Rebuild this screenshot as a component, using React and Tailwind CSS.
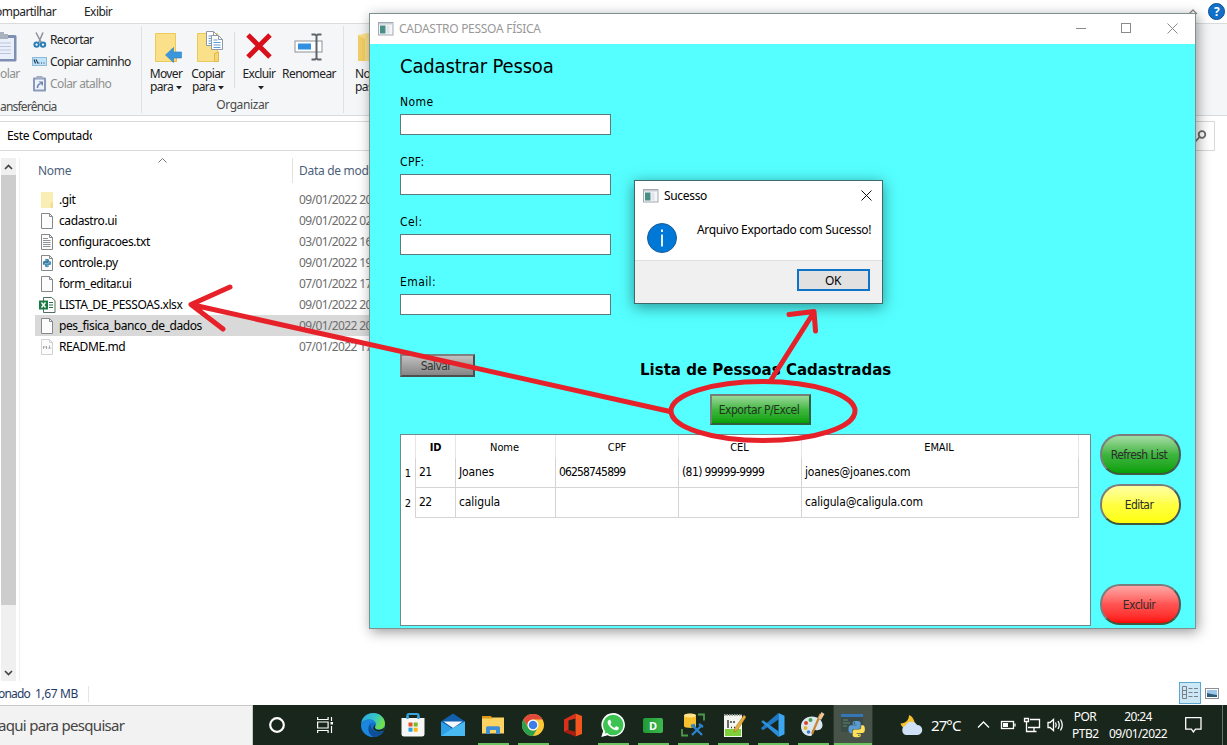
import React from "react";
import { FaWhatsapp } from "react-icons/fa";

const PY =
  "M14.25.18l.9.2.73.26.59.3.45.32.34.34.25.34.16.33.1.3.04.26.02.2-.01.13V8.5l-.05.63-.13.55-.21.46-.26.38-.3.31-.33.25-.35.19-.35.14-.33.1-.3.07-.26.04-.21.02H8.77l-.69.05-.59.14-.5.22-.41.27-.33.32-.27.35-.2.36-.15.37-.1.35-.07.32-.04.27-.02.21v3.06H3.17l-.21-.03-.28-.07-.32-.12-.35-.18-.36-.26-.36-.36-.35-.46-.32-.59-.28-.73-.21-.88-.14-1.05-.05-1.23.06-1.22.16-1.04.24-.87.32-.71.36-.57.4-.44.42-.33.42-.24.4-.16.36-.1.32-.05.24-.01h.16l.06.01h8.16v-.83H6.18l-.01-2.75-.02-.37.05-.34.11-.31.17-.28.25-.26.31-.23.38-.2.44-.18.51-.15.58-.12.64-.1.71-.06.77-.04.84-.02 1.27.05zm-6.3 1.98l-.23.33-.08.41.08.41.23.34.33.22.41.09.41-.09.33-.22.23-.34.08-.41-.08-.41-.23-.33-.33-.22-.41-.09-.41.09z";

const PythonMark = ({ x = 0, y = 0, s = 1, blue = "#3b7ab0", yellow = "#ffd94a" }) => (
  <g transform={`translate(${x} ${y}) scale(${s})`}>
    <path d={PY} fill={blue} />
    <path d={PY} fill={yellow} transform="rotate(180 12 12)" />
  </g>
);

/* ---------- ribbon ---------- */

const PasteIcon = () => (
  <svg width="18" height="31" viewBox="0 0 18 31">
    <rect x="-8" y="3" width="24.5" height="26.5" rx="1.5" fill="#7f8fb2" />
    <rect x="-6" y="6" width="20" height="21" fill="#e9f0fa" />
    <path d="M-2 0h6v2h4v5h-12z" fill="#a9b1bf" />
    <path d="M0 11h11M0 14.5h11M0 18h11M0 21.5h11" stroke="#b9c6de" />
  </svg>
);

const ScissorsIcon = () => (
  <svg width="16" height="16" viewBox="0 0 16 16" fill="none">
    <path d="M4 0.5L9.5 11M11 0.5L6.5 11" stroke="#8a9099" strokeWidth="1.5" />
    <circle cx="4.6" cy="12.6" r="2.2" stroke="#2a7fb8" strokeWidth="2" />
    <circle cx="11" cy="12.6" r="2.2" stroke="#2a7fb8" strokeWidth="2" />
  </svg>
);

const PathIcon = () => (
  <svg width="16" height="16" viewBox="0 0 16 16">
    <rect x="0.5" y="3.5" width="14" height="8" fill="#bfe3fa" stroke="#8fb9d6" />
    <path d="M2 5.5l1.5 4M4 5.5l2 4M6.5 9h1M9 9h1M11.5 9h1" stroke="#1d3c55" strokeWidth="1.2" />
  </svg>
);

const ShortcutIcon = () => (
  <svg width="16" height="16" viewBox="0 0 16 16">
    <rect x="1" y="1.5" width="13" height="14" rx="1" fill="#8a9abb" />
    <rect x="3" y="3.5" width="9" height="10" fill="#eef3fa" />
    <rect x="4.500" y="0" width="6" height="3" fill="#a4aebf" />
    <path d="M5.500 12c0-3 1-4 3-4" stroke="#7187b0" strokeWidth="1.6" fill="none" />
    <path d="M6.500 5.500h4.500v4.500z" fill="#7187b0" />
  </svg>
);

const FolderBody = () => (
  <>
    <path d="M0.500 0.500h20v28h-20z" fill="#fbe08a" stroke="#ecc95c" />
    <path d="M17.500 28.500v-8l4-1.500v9.500z" fill="#f5d673" stroke="#dfb94a" />
  </>
);

const MoveIcon = () => (
  <svg width="28" height="30" viewBox="0 0 28 30" className="-mb-[3px] ml-[6px]">
    <FolderBody />
    <path d="M10.500 22l8-7.500v4.500h8v6h-8v4.500z" fill="#3a97dd" stroke="#2b7fc4" strokeWidth="0.600" />
  </svg>
);

const Sheet = ({ x, y }) => (
  <g transform={`translate(${x} ${y})`}>
    <path d="M.5.500h7l4 4v10h-11z" fill="#fff" stroke="#8e99a6" />
    <path d="M7.500.500v4h4" fill="none" stroke="#8e99a6" />
    <path d="M2.500 5h4M2.500 7.500h7M2.500 10h7M2.500 12.500h7" stroke="#5e9bd3" />
  </g>
);

const CopyIcon = () => (
  <svg width="28" height="32" viewBox="0 0 28 32" className="-mb-[3px] ml-[6px]">
    <g transform="translate(0 2)">
      <FolderBody />
    </g>
    <Sheet x={9} y={0} />
    <Sheet x={14} y={4} />
  </svg>
);

const RenameIcon = () => (
  <svg width="30" height="28" viewBox="0 0 30 28" fill="none" className="-mb-[1px]">
    <rect x="1" y="8" width="27" height="11" fill="#fff" stroke="#8d9298" />
    <rect x="4" y="10.500" width="13" height="6" fill="#2f8fe0" />
    <path d="M17.500 1.500h3.500l1.500 1 1.500-1h3.500M22.500 2v24M17.500 26.500h3.500l1.500-1 1.500 1h3.500" stroke="#5f6468" strokeWidth="2" />
  </svg>
);

const Caret = () => (
  <svg width="6" height="4" viewBox="0 0 6 4" className="ml-[3px] inline-block align-middle">
    <path d="M0 0h6L3 3.500z" fill="#222" />
  </svg>
);

const BigButton = ({ icon, l1, l2, width }) => (
  <div className={`flex shrink-0 flex-col items-center ${width}`}>
    <div className="flex h-[35px] items-end justify-center pb-[1px]">{icon}</div>
    <div className="mt-[6px] text-center leading-[13px] whitespace-nowrap">
      <div>{l1}</div>
      <div className="h-[13px]">{l2}</div>
    </div>
  </div>
);

/* ---------- file list ---------- */

const FileIcon = ({ kind }) => {
  if (kind === "folder")
    return (
      <svg width="16" height="16" viewBox="0 0 16 16">
        <path d="M2 0h12v16H2z" fill="#fbeeb5" />
        <path d="M11.500 16v-5l2.500-1v6z" fill="#f2dd92" />
      </svg>
    );
  if (kind === "excel")
    return (
      <svg width="17" height="16" viewBox="0 0 17 16">
        <path d="M4.500.5h8l3.500 3v12h-11.500z" fill="#fff" stroke="#50705f" />
        <path d="M10 5.500h4M10 8h4M10 10.500h4" stroke="#217346" />
        <rect x="0" y="3.500" width="9" height="9" fill="#1a7a43" />
        <path d="M2.500 5.500l4 5M6.500 5.500l-4 5" stroke="#fff" strokeWidth="1.400" />
      </svg>
    );
  return (
    <svg width="16" height="16" viewBox="0 0 16 16">
      <path d="M2.500.5h8l3 3v12h-11z" fill="#fcfcfd" stroke={kind === "md" ? "#cfd1d4" : "#85888c"} />
      <path d="M10.500.5v3h3" fill="none" stroke={kind === "md" ? "#cfd1d4" : "#85888c"} />
      {kind === "txt" && <path d="M4 4.500h5M4 6.500h7.500M4 8.500h7.500M4 10.500h7.500M4 12.500h7.500" stroke="#8f9398" />}
      {kind === "py" && <PythonMark x={3.9} y={4} s={0.34} blue="#3d7ea6" yellow="#4d90b5" />}
      {kind === "md" && <path d="M4.500 10V7l1.500 1.500L7.500 7v3M10.500 6.500v3M9 8.500l1.500 1.500 1.500-1.500" stroke="#a9abae" fill="none" />}
    </svg>
  );
};

const FILES = [
  { n: ".git", k: "folder", d: "09/01/2022 20:11" },
  { n: "cadastro.ui", k: "file", d: "09/01/2022 02:08" },
  { n: "configuracoes.txt", k: "txt", d: "03/01/2022 16:40" },
  { n: "controle.py", k: "py", d: "09/01/2022 19:58" },
  { n: "form_editar.ui", k: "file", d: "07/01/2022 17:22" },
  { n: "LISTA_DE_PESSOAS.xlsx", k: "excel", d: "09/01/2022 20:24" },
  { n: "pes_fisica_banco_de_dados", k: "file", d: "09/01/2022 20:20", sel: true },
  { n: "README.md", k: "md", d: "07/01/2022 17:35" },
];

const Explorer = () => (
  <div className="flex h-[705px] flex-col text-[12px] tracking-[-0.3px] text-[#222]">
    <div className="flex h-[24px] shrink-0 items-center justify-between border-b border-[#dadbdc] bg-white tracking-[-0.55px]">
      <div className="flex">
        <span className="w-[84px] whitespace-nowrap -indent-[5px]">ompartilhar</span>
        <span>Exibir</span>
      </div>
      <div className="flex items-center gap-[10px] pr-[2px]">
        <svg width="10" height="6" viewBox="0 0 10 6" fill="none">
          <path d="M1 5l4-4 4 4" stroke="#8c8c8c" strokeWidth="1.300" />
        </svg>
        <span className="flex h-[17px] w-[17px] items-center justify-center rounded-full border border-[#0a4f94] bg-[#1270c8] text-[12px] leading-none font-bold text-white">
          ?
        </span>
      </div>
    </div>

    <div className="flex h-[92px] shrink-0 border-b border-[#dadbdc] bg-[#f5f6f7] tracking-[-0.6px]">
      <div className="my-[2px] flex w-[142px] flex-col border-r border-[#e0e1e2]">
        <div className="flex h-[66px]">
          <div className="w-[32px] shrink-0 overflow-hidden pt-[6px] text-[#8f8f8f]">
            <PasteIcon />
            <div className="mt-[3px] leading-[16px]">olar</div>
          </div>
          <div className="pt-[3px]">
            <div className="flex h-[22px] items-center gap-[2px]"><ScissorsIcon />Recortar</div>
            <div className="flex h-[22px] items-center gap-[2px]"><PathIcon />Copiar caminho</div>
            <div className="flex h-[22px] items-center gap-[2px] text-[#8f8f8f]"><ShortcutIcon />Colar atalho</div>
          </div>
        </div>
        <div className="mt-[6px] pt-[1px] leading-[16px] tracking-[-0.8px] text-[#4a4a4a]">ansferência</div>
      </div>
      <div className="my-[2px] flex w-[202px] flex-col border-r border-[#e0e1e2]">
        <div className="flex h-[73px]">
          <BigButton width="w-[48px]" icon={<MoveIcon />} l1="Mover" l2={<>para<Caret /></>} />
          <BigButton width="w-[36px]" icon={<CopyIcon />} l1="Copiar" l2={<>para<Caret /></>} />
          <div className="mt-[6px] ml-[8px] h-[56px] w-px bg-[#dcdddf]" />
          <BigButton
            width="w-[48px]"
            icon={
              <svg width="28" height="27" viewBox="0 0 28 27" className="mb-0">
                <path d="M3 2l22 22M25 2L3 24" stroke="#d8101c" strokeWidth="5" />
              </svg>
            }
            l1="Excluir"
            l2={<Caret />}
          />
          <BigButton width="w-[52px]" icon={<RenameIcon />} l1="Renomear" l2="" />
        </div>
        <div className="text-center leading-[16px] tracking-[-0.4px] text-[#4a4a4a]">Organizar</div>
      </div>
      <div className="flex pl-[11px]">
        <div>
          <svg width="28" height="28" viewBox="0 0 28 28" className="mt-[9px] ml-[3px]">
            <path d="M0 2l10-2h18v28H0z" fill="#fbe08a" />
            <path d="M0 2l7 4v22H0z" fill="#f2cf67" />
          </svg>
          <div className="mt-[6px] leading-[13px]"><div>Nova</div><div>pasta</div></div>
        </div>
      </div>
    </div>

    <div className="mt-[5px] flex h-[30px] shrink-0 justify-between">
      <div className="flex w-[369px] items-center border-y border-[#d9d9d9] pl-[7px] text-black">
        <span className="w-[85px] overflow-hidden whitespace-nowrap">Este Computador</span>
      </div>
      <div className="mr-[12px] flex w-[40px] items-center justify-end border border-[#d9d9d9] pr-[7px]">
        <svg width="13" height="13" viewBox="0 0 13 13" fill="none" stroke="#6a6a6a">
          <circle cx="8" cy="4.500" r="3.300" strokeWidth="1.800" />
          <path d="M5.500 7L1 12" strokeWidth="1.800" />
        </svg>
      </div>
    </div>

    <div className="mt-[7px] flex min-h-0 flex-1">
      <div className="ml-[1px] flex w-[15px] shrink-0 flex-col bg-[#f0f0f0]">
        <div className="flex h-[17px] items-center justify-center">
          <svg width="9" height="6" viewBox="0 0 9 6" fill="none"><path d="M1 5l3.500-3.500L8 5" stroke="#444" strokeWidth="1.700" /></svg>
        </div>
        <div className="h-[430px] bg-[#cdcdcd]" />
        <div className="flex-1" />
        <div className="flex h-[17px] items-center justify-center">
          <svg width="9" height="6" viewBox="0 0 9 6" fill="none"><path d="M1 1l3.500 3.500L8 1" stroke="#444" strokeWidth="1.700" /></svg>
        </div>
      </div>
      <div className="ml-[3px] w-[351px] overflow-hidden border-l border-[#f0f0f0]">
        <div className="flex h-[31px] pl-[18px] text-[#4c607a]">
          <div className="relative h-[25px] w-[255px] shrink-0 border-r border-[#e2e2e2] leading-[26px]">
            Nome
            <svg width="9" height="5" viewBox="0 0 9 5" fill="none" className="absolute top-0 left-[120px]">
              <path d="M.5 4.500l4-4 4 4" stroke="#777" />
            </svg>
          </div>
          <div className="pl-[6px] leading-[26px] whitespace-nowrap">Data de modificação</div>
        </div>
        {FILES.map((f) => (
          <div key={f.n} className={`ml-[15px] flex h-[21px] items-center ${f.sel ? "bg-[#d9d9d9]" : ""}`}>
            <div className="flex w-[24px] shrink-0 justify-center">
              <FileIcon kind={f.k} />
            </div>
            <div className="w-[240px] shrink-0 tracking-[-0.4px] text-black">{f.n}</div>
            <div className="tracking-[-0.6px] whitespace-nowrap text-[#6d6d6d]">{f.d}</div>
          </div>
        ))}
      </div>
    </div>

    <div className="flex h-[24px] shrink-0 items-center justify-between">
      <div className="flex items-center pt-[2px] text-[#1f3c66]">
        <span className="w-[35px] tracking-[-0.8px] -indent-[2px]">onado</span>
        <span className="tracking-[-0.4px]">1,67 MB</span>
        <span className="ml-[10px] h-[16px] w-px bg-[#e5e5e5]" />
      </div>
      <div className="flex items-center gap-[4px] pr-[8px]">
        <span className="flex h-[22px] w-[22px] items-center justify-center border border-[#5aa7cf] bg-[#cce8f6]">
          <svg width="16" height="14" viewBox="0 0 16 14" fill="none" stroke="#7b7f86">
            <path d="M.5.500h4v12h-4zM.5 4.500h4M.5 8.500h4M6.500 2.500h4M12 2.500h4M6.500 6.500h4M12 6.500h4M6.500 10.500h4M12 10.500h4" />
          </svg>
        </span>
        <svg width="14" height="11" viewBox="0 0 14 11">
          <rect x=".5" y=".5" width="13" height="10" fill="#fff" stroke="#8c8f94" />
          <rect x="2" y="2" width="10" height="7" fill="#9cc7ea" />
          <path d="M2 9V5l4 1 6 1v2z" fill="#2e5d77" />
        </svg>
      </div>
    </div>
  </div>
);

/* ---------- registration window ---------- */

const AppGlyph = () => (
  <svg width="16" height="14" viewBox="0 0 16 14">
    <rect x=".5" y=".5" width="14.500" height="12.500" fill="#f4f6f8" stroke="#a3a9b3" />
    <rect x="1" y="1" width="13.500" height="1.500" fill="#c9ced6" />
    <rect x="2" y="3.500" width="5.500" height="8" fill="#4a8f86" />
    <rect x="8.500" y="3.500" width="3" height="8" fill="#dfe3ea" />
  </svg>
);

const Field = ({ label }) => (
  <label className="flex h-[60px] flex-col text-[12px] leading-[16px] tracking-[0.4px]">
    <span className="h-[20px]">{label}</span>
    <input className="h-[21px] w-[211px] border border-[#5c7a7a] bg-white outline-none" />
  </label>
);

const ROWS = [
  ["1", "21", "Joanes", "06258745899", "(81) 99999-9999", "joanes@joanes.com"],
  ["2", "22", "caligula", "", "", "caligula@caligula.com"],
];

const CELL_TRACKING = ["tracking-[-0.7px]", "tracking-[-0.1px]", "tracking-[-0.85px]", "tracking-[-0.6px]", "tracking-[-0.15px]"];

const COLS = "grid grid-cols-[15px_40px_100px_123px_123px_277px]";

const People = () => (
  <div className="h-[192px] w-[691px] border border-[#6f8a8a] bg-white text-[12px]">
    <div className={`${COLS} h-[23px] text-center text-[11px] leading-[25px] tracking-[-0.1px]`}>
      <div className="border-r border-[#e6e6e6]" />
      <div className="border-r border-[#e6e6e6] font-bold">ID</div>
      <div className="border-r border-[#e6e6e6] pr-[2px]">Nome</div>
      <div className="border-r border-[#e6e6e6]">CPF</div>
      <div className="border-r border-[#e6e6e6] pr-[1px]">CEL</div>
      <div className="border-r border-[#e6e6e6] pr-[2px]">EMAIL</div>
    </div>
    {ROWS.map((r) => (
      <div key={r[0]} className={`${COLS} h-[30px] leading-[29px]`}>
        <div className="h-[30px] border-r border-[#d4d4d4] pt-[1px] text-center text-[11px]">{r[0]}</div>
        {r.slice(1).map((c, i) => (
          <div key={i} className={`h-[30px] border-r border-b border-[#d4d4d4] pl-[3px] ${CELL_TRACKING[i]}`}>{c}</div>
        ))}
      </div>
    ))}
  </div>
);

const Pill = ({ color, children }) => (
  <button
    className={`h-[41px] w-[81px] rounded-[20px] border-2 border-t-[#7d7d7d] border-r-[#4a5a5a] border-b-[#3f5a3f] border-l-[#7d7d7d] pt-[1px] pr-[3px] text-[12px] tracking-[-0.55px] whitespace-nowrap text-[#2c2c2c] ${color}`}
  >
    {children}
  </button>
);

const Registration = () => (
  <div className="absolute top-[13px] left-[369px] flex h-[616px] w-[827px] flex-col border border-[#7f9090] bg-[#55ffff] font-['DejaVu_Sans_Condensed','DejaVu_Sans',sans-serif] text-black shadow-[2px_3px_12px_rgba(0,0,0,0.4)]">
    <div className="flex h-[30px] shrink-0 items-center bg-white pl-[8px] font-['Noto_Sans',sans-serif] text-[12px] tracking-[-0.28px] text-[#999]">
      <AppGlyph />
      <span className="ml-[5px] flex-1">CADASTRO PESSOA FÍSICA</span>
      <svg width="102" height="11" viewBox="0 0 102 11" fill="none" stroke="#8a8a8a" className="mr-[17px] mb-[2px]">
        <path d="M0 5.500h10" />
        <rect x="45.500" y=".5" width="9" height="9" />
        <path d="M91.500.5l10 10M101.500.5l-10 10" />
      </svg>
    </div>
    <div className="flex flex-1 flex-col pl-[30px]">
      <h1 className="mt-[9px] h-[41px] text-[20px] leading-[26px] tracking-[-0.15px]">Cadastrar Pessoa</h1>
      <Field label="Nome" />
      <Field label="CPF:" />
      <Field label="Cel:" />
      <Field label="Email:" />
      <div className="mt-[20px] flex h-[80px]">
        <button className="h-[23px] w-[75px] border-2 border-t-[#808080] border-r-[#4d4d4d] border-b-[#4d4d4d] border-l-[#808080] bg-linear-to-b from-[#c0c0c0] to-[#868686] pt-px pr-[3px] text-[12px] leading-[18px] tracking-[-0.6px] text-[#333]">
          Salvar
        </button>
        <div className="ml-[165px] w-[251px]">
          <h2 className="mt-[5px] font-['DejaVu_Sans',sans-serif] text-[15px] leading-[22px] font-bold whitespace-nowrap">Lista de Pessoas Cadastradas</h2>
          <button className="mt-[13px] ml-[70px] h-[31px] w-[101px] border-2 border-t-[#768076] border-r-[#2f5f3f] border-b-[#2f5f3f] border-l-[#768076] bg-linear-to-b from-[#98d898] via-[#3fb83f] to-[#00a000] pt-px pr-[3px] text-[12px] tracking-[-0.5px] whitespace-nowrap text-[#1f331f]">
            Exportar P/Excel
          </button>
        </div>
      </div>
      <div className="flex">
        <People />
        <div className="ml-[9px] flex flex-col">
          <Pill color="bg-linear-to-b from-[#a4dca4] via-[#3db53d] to-[#00a000]">Refresh List</Pill>
          <div className="h-[9px]" />
          <Pill color="bg-linear-to-b from-[#ffffa0] via-[#ffff40] to-[#ffff00]">Editar</Pill>
          <div className="h-[59px]" />
          <Pill color="bg-linear-to-b from-[#ffa6a6] via-[#ff5252] to-[#ff0000]">Excluir</Pill>
        </div>
      </div>
    </div>
  </div>
);

const Dialog = () => (
  <div className="absolute top-[180px] left-[634px] flex h-[124px] w-[249px] flex-col border border-[#3d6b6b] bg-white text-[12px] tracking-[-0.33px] text-black shadow-[0_3px_14px_rgba(0,40,40,0.5)]">
    <div className="flex h-[29px] items-center pl-[8px]">
      <AppGlyph />
      <span className="ml-[5px] flex-1">Sucesso</span>
      <svg width="11" height="11" viewBox="0 0 11 11" className="mr-[10px]"><path d="M.5.5l10 10M10.500.5l-10 10" stroke="#111" /></svg>
    </div>
    <div className="flex h-[51px] shrink-0 border-b border-[#dfdfdf] pl-[12px]">
      <svg width="30" height="30" viewBox="0 0 30 30" className="mt-[13px]">
        <circle cx="15" cy="15" r="14.500" fill="#0078d7" stroke="#1a5c96" />
        <path d="M15 11.500v12M15 6.500v2.500" stroke="#fff" strokeWidth="1.800" />
      </svg>
      <span className="mt-[12px] ml-[20px] leading-[16px] whitespace-nowrap">Arquivo Exportado com Sucesso!</span>
    </div>
    <div className="flex flex-1 items-start justify-end bg-[#f0f0f0] pt-[8px] pr-[12px]">
      <button className="h-[22px] w-[73px] border-2 border-[#0f74c8] bg-[#e1e1e1] pr-[1px] leading-[17px]">OK</button>
    </div>
  </div>
);

/* ---------- taskbar ---------- */

const Svg = ({ children }) => <svg width="26" height="26" viewBox="0 0 26 26" fill="none">{children}</svg>;

const EdgeIcon = () => (
  <Svg>
    <defs>
      <linearGradient id="eg" x1="0" y1="0" x2="1" y2="0.400"><stop offset="0" stopColor="#2aa6e0" /><stop offset=".6" stopColor="#35c5c8" /><stop offset="1" stopColor="#6fe04a" /></linearGradient>
    </defs>
    <circle cx="13" cy="13" r="12" fill="#1273c9" />
    <path d="M1.200 11C2.500 4.500 7.500 1 13 1c7 0 12 5 12 10.500 0 4-3 6-6 6-2.500 0-4-1-4-2 0-.8 1-1.300 1-3C16 9.500 13 7.500 9.500 7.500 5.500 7.500 2.500 9 1.200 11z" fill="url(#eg)" />
    <path d="M10.500 11c-3.500 3-3 10 3.500 13.900C9 25.300 1.500 21.500 1.200 14 1 9.500 6.500 7 10 7.600c3 .4 5 2.400 5.500 4.400-1.500-1.600-3.500-2-5-1z" fill="#1b86dc" />
    <path d="M10.500 12c-.5 5 4.500 8.500 9.500 8 2 0 3-.7 4-1-2 4-6.500 6.300-10.500 5.900C8 23 7 15.500 10.500 12z" fill="#0d4f99" />
    <path d="M14.500 12.500c1 1.500.2 2.300.5 3.500.7 2.600 6 2.600 9.700-.5l-1.200 3.300c-4 1.700-9 .7-10.500-2.300z" fill="#19261b" />
  </Svg>
);
const StoreIcon = () => (
  <Svg>
    <path d="M7.500 8V3.500c0-.9.600-1.500 1.500-1.500h8c.9 0 1.500.6 1.500 1.500V8" stroke="#35a7e0" strokeWidth="2.200" />
    <path d="M1.500 6h23v16c0 1.700-1 2.500-2.500 2.500H4c-1.500 0-2.500-.8-2.500-2.500z" fill="#f6f6f6" />
    <path d="M7.500 7v-3M18.500 7v-3" stroke="#35a7e0" strokeWidth="2.200" />
    <path d="M8.500 10.500h4v4h-4z" fill="#e8502a" /><path d="M13.700 10.500h4v4h-4z" fill="#7cb928" />
    <path d="M8.500 15.700h4v4h-4z" fill="#20a3e8" /><path d="M13.700 15.700h4v4h-4z" fill="#fbb813" />
  </Svg>
);
const MailIcon = () => (
  <Svg>
    <path d="M1 9.500L13 1.500l12 8v6H1z" fill="#1160ae" />
    <path d="M1 9.500L13 17l12-7.500V24H1z" fill="#2d9fe6" />
    <path d="M1 24l12-8 12-6.500V24z" fill="#49b9f2" />
    <path d="M3.500 9.500h19L13 16z" fill="#f4f8fc" />
  </Svg>
);
const FolderTask = () => (
  <Svg>
    <path d="M2 5.500h22v16H2z" fill="#fcd462" /><path d="M2 4h9l1.500 2.500H2z" fill="#d99a1b" />
    <path d="M6 22v-6c0-1 .7-1.700 1.700-1.700h10.600c1 0 1.700.7 1.700 1.700v6h-4v-4h-6v4z" fill="#3d8ed8" />
  </Svg>
);
const ChromeIcon = () => (
  <Svg>
    <circle cx="13" cy="13" r="11" fill="#fcc934" />
    <path d="M3.470 7.500A11 11 0 0 1 22.530 7.500H13a5.500 5.500 0 0 0-4.760 8.250z" fill="#e14a3a" />
    <path d="M3.470 7.500L8.240 15.750A5.500 5.500 0 0 0 17.760 15.750L13 24A11 11 0 0 1 3.470 7.500z" fill="#2da04e" />
    <circle cx="13" cy="13" r="5.500" fill="#fff" /><circle cx="13" cy="13" r="4.300" fill="#3f7ee8" />
  </Svg>
);
const OfficeIcon = () => (
  <Svg>
    <path d="M4 7.500L15.500 1.500v5L8.500 8.500v9.500L4 20z" fill="#d9301c" />
    <path d="M15.500 1.500L22 4v18l-6.500 2.500z" fill="#f2551d" />
    <path d="M4 20l4.500-2 7 1.500v5z" fill="#a81c12" />
  </Svg>
);
const DIcon = () => (
  <span className="flex h-[15px] w-[20px] items-center justify-center rounded-[2px] bg-linear-to-r from-[#1f9a35] to-[#3cb84e] text-[11px] leading-none font-bold text-white">D</span>
);
const SqlIcon = () => (
  <Svg>
    <path d="M4 3.500c0-2.500 12-2.500 12 0V14c0 2.500-12 2.500-12 0z" fill="#f7c02c" /><ellipse cx="10" cy="3.500" rx="6" ry="2" fill="#fde28a" />
    <path d="M18 2.500h6v6M2 17v6.500h6" stroke="#4d9a4a" strokeWidth="1.800" />
    <path d="M12 23l9-9M13 14l9 9" stroke="#2b83cc" strokeWidth="2.400" /><path d="M11 14l4-1M19 12l4 3" stroke="#2b83cc" strokeWidth="2.400" />
  </Svg>
);
const NotepadIcon = () => (
  <Svg>
    <path d="M4 3h18v22H4z" fill="#f3f6ee" /><path d="M5 17h16v7H5z" fill="#7fcf3a" />
    <path d="M4 3h18" stroke="#9aa09a" strokeWidth="2" strokeDasharray="1.500 1" />
    <path d="M8 8v8M11 9v2M14 9v2M11 15.500h1M14 15.500h1" stroke="#333" strokeWidth="1.400" />
    <path d="M24 3l-9 13-1 4 3.500-2L26 5z" fill="#e8b13b" stroke="#a37221" strokeWidth=".6" />
  </Svg>
);
const CodeIcon = () => (
  <Svg>
    <path d="M18.500 1v6.500L3 18.300l-1.800-1.600v-.9z" fill="#1f78c1" />
    <path d="M1.200 9.800L3 8.300l15.500 11V25z" fill="#2b8fdc" />
    <path d="M18.500 1L24.500 3.800v18.400L18.500 25z" fill="#3ba7f2" />
  </Svg>
);
const PaintIcon = () => (
  <Svg>
    <path d="M12 4.500C5.500 4.500 1 9 1 14.500S5 24 10 24c2.500 0 2.500-2 2-3.500-.5-2 1-3 3.500-2.500 4 .8 7-1 7-5 0-5-5-8.500-10.500-8.500z" fill="#dbe8f2" />
    <circle cx="6" cy="11" r="2" fill="#d9452f" /><circle cx="10.500" cy="8" r="2" fill="#3f9f4a" /><circle cx="5.500" cy="16" r="2" fill="#e8b62c" /><circle cx="8.500" cy="20" r="1.800" fill="#3f78c9" />
    <path d="M20.500 2L12 22" stroke="#c98436" strokeWidth="2.200" /><path d="M18.500 6l3-6 3 2-3.500 6z" fill="#e9c79a" />
  </Svg>
);
const PyTask = () => (
  <Svg>
    <path d="M1 2h22v18H1z" fill="#3a4a48" /><path d="M1 2h22v3H1z" fill="#3576b4" /><path d="M3 8h5M3 11h7M3 14h4" stroke="#5f8a66" />
    <PythonMark x={8.500} y={9} s={0.68} blue="#5b9bd4" yellow="#ffe05a" />
  </Svg>
);
const WhatsTask = () => (
  <svg width="24" height="26" viewBox="0 -1 24 26">
    <path d="M12.200 0a11.800 11.800 0 0 0-10 18L.3 24l6.200-1.800A11.800 11.800 0 1 0 12.200 0z" fill="#fff" />
    <circle cx="12.200" cy="11.900" r="9.800" fill="#3cc351" />
    <path d="M2 22.200l1.600-5 3.500 3.500z" fill="#3cc351" />
    <FaWhatsapp x="-0.5" y="-0.7" size={25.5} color="#fff" />
    <circle cx="12.200" cy="11.900" r="9" fill="none" stroke="#3cc351" strokeWidth="2.500" />
  </svg>
);

const TASKS = [
  [EdgeIcon, 0], [StoreIcon, 0], [MailIcon, 0], [FolderTask, 1], [ChromeIcon, 1], [OfficeIcon, 0], [WhatsTask, 1],
  [DIcon, 1], [SqlIcon, 1], [NotepadIcon, 1], [CodeIcon, 1], [PaintIcon, 1], [PyTask, 2],
];

const Taskbar = () => (
  <div className="flex h-[40px] bg-[#19261b] text-white">
    <div className="flex w-[253px] items-center border-t border-r border-[#c8c8c8] bg-[#f2f2f2] text-[15px] tracking-[-0.7px] text-[#444]">
      <span className="whitespace-nowrap -indent-[2px]">aqui para pesquisar</span>
    </div>
    <div className="flex w-[48px] items-center justify-center">
      <svg width="18" height="18" viewBox="0 0 18 18" fill="none"><circle cx="9" cy="9" r="6.800" stroke="#fff" strokeWidth="2.200" /></svg>
    </div>
    <div className="flex w-[48px] items-center justify-center">
      <svg width="17" height="16" viewBox="0 0 17 16" fill="none" stroke="#fff" strokeWidth="1.200">
        <path d="M.6 0v2.500h10.500V0M.6 16v-2.500h10.500V16M.6 5h10.500v6H.6zM14.500 0v4M14.500 9v7" />
        <rect x="13.500" y="5" width="2.500" height="2.500" fill="#fff" stroke="none" />
      </svg>
    </div>
    <div className="ml-[4px] flex">
      {TASKS.map(([Icon, state], i) => (
        <div key={i} className={`flex h-[40px] w-[40px] flex-col items-center ${state === 2 ? "border-x border-[#2c382e] bg-[#475249]" : ""}`}>
          <div className="flex h-[38px] items-center pt-[2px]"><Icon /></div>
          {state > 0 && <div className={`h-[2px] bg-[#6cc35f] ${state === 2 ? "w-[38px]" : "w-[31px]"}`} />}
        </div>
      ))}
    </div>
    <div className="flex flex-1 items-center pl-[27px]">
      <svg width="23" height="21" viewBox="0 0 23 21">
        <path d="M9 0c0 5-3 8-8.500 8.500C2 13 6 15 10 14.500c4-.5 6-5 4-9C13 2.500 11 .5 9 0z" fill="#f5c12e" />
        <path d="M6 20a5 5 0 0 1-.5-9.500A6.500 6.500 0 0 1 17 10a5 5 0 0 1 .5 10z" fill="#cfe2f5" />
      </svg>
      <span className="ml-[8px] w-[46px] text-[15px] tracking-[-0.9px]">27°C</span>
      <svg width="90" height="18" viewBox="0 0 90 18" fill="none" stroke="#fff" strokeWidth="1.300">
        <path d="M1 11.500L6.500 6l5.500 5.500" />
        <rect x="24.500" y="5.500" width="12" height="7" /><rect x="26" y="7" width="5" height="4" fill="#fff" stroke="none" /><path d="M38 7.500v3" />
        <path d="M53 3.500h9.500v8H51M57 11.500v4M52.500 15.500h7M47.500 2.500h4v3h-4zM49.500 6v9.500h3" />
        <path d="M71 6.500h2l3.500-3v11l-3.500-3h-2zM78.500 6.500q1.500 2.500 0 5M81 5q2.500 4 0 8M83.500 3.500q3.500 5.500 0 11" />
      </svg>
      <div className="ml-[5px] w-[26px] text-center text-[12px] leading-[17px] tracking-[-0.5px]"><div>POR</div><div>PTB2</div></div>
      <div className="ml-[10px] w-[60px] text-center text-[12px] leading-[17px] tracking-[-0.6px] whitespace-nowrap"><div>20:24</div><div>09/01/2022</div></div>
      <svg width="17" height="16" viewBox="0 0 17 16" fill="none" className="ml-[17px]">
        <path d="M.7.7h15.300v11.500h-5.500L8.400 15l-2-2.800H.7z" stroke="#fff" strokeWidth="1.300" />
      </svg>
    </div>
    <div className="mr-[4px] w-px bg-[#68716a]" />
  </div>
);

const Annotations = () => (
  <svg width="1227" height="745" viewBox="0 0 1227 745" fill="none" stroke="#e62129" strokeWidth="5" strokeLinecap="round" strokeLinejoin="round" className="pointer-events-none absolute top-0 left-0">
    <ellipse cx="763" cy="411" rx="92" ry="29.500" />
    <path d="M670 411.500L191 304.500M230 287L191 304.500L223 329" />
    <path d="M771 380L814 312M789 314.500L814 311.500L815.500 331" />
  </svg>
);

export default function App() {
  return (
    <div className="relative h-[745px] w-[1227px] overflow-hidden bg-white font-['Noto_Sans',sans-serif]">
      <Explorer />
      <Taskbar />
      <Registration />
      <Dialog />
      <Annotations />
    </div>
  );
}
